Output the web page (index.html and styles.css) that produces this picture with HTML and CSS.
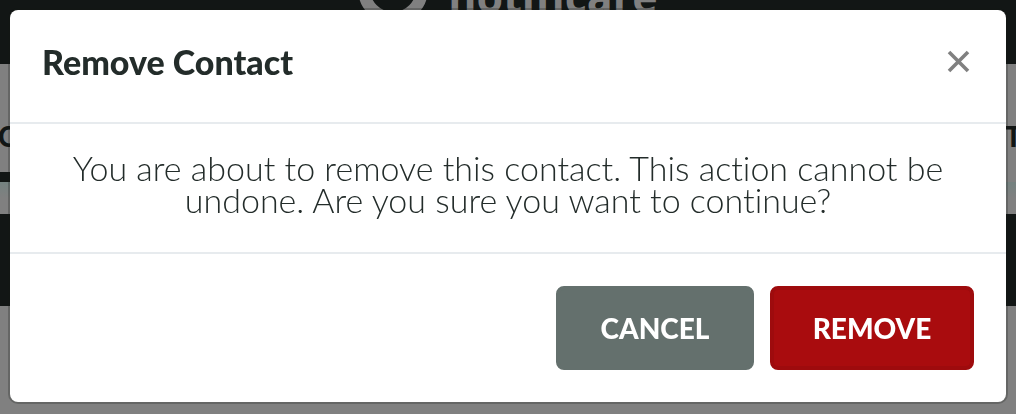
FILE: index.html
```html
<!DOCTYPE html>
<html lang="en">
<head>
<meta charset="utf-8">
<title>Remove Contact</title>
<link rel="stylesheet" href="styles.css">
</head>
<body>
<div class="page">
  <header class="site-header">
    <div class="brand">
      <svg class="brand-mark" viewBox="0 0 70 70" aria-hidden="true"><circle cx="35" cy="35" r="29" fill="none" stroke="#808080" stroke-width="12"/></svg>
      <span class="brand-name">notificare</span>
    </div>
  </header>
  <div class="toolbar"><span>C</span><span>T</span></div>
  <div class="divider"><span class="divider-tab"></span></div>
  <div class="shade"><span class="shade-start"></span><span class="shade-end"></span></div>
  <div class="band"></div>
</div>
<div class="overlay">
  <section class="modal" role="dialog" aria-modal="true" aria-labelledby="modal-title">
    <div class="modal-header">
      <h1 class="modal-title" id="modal-title">Remove Contact</h1>
      <button class="close" type="button" aria-label="Close">
        <svg class="close-icon" viewBox="0 0 24 24" aria-hidden="true"><path d="M3 3 22 22M22 3 3 22" fill="none" stroke="#808080" stroke-width="3.600"/></svg>
      </button>
    </div>
    <p class="modal-body">You are about to remove this contact. This action cannot be undone. Are you sure you want to continue?</p>
    <div class="modal-footer">
      <button class="button" type="button">CANCEL</button>
      <button class="button button-danger" type="button">REMOVE</button>
    </div>
  </section>
</div>
</body>
</html>
```
FILE: styles.css
```css
* { box-sizing: border-box; }
body {
  margin: 0;
  background: #808080;
  color: #232c2a;
  font-family: Lato, sans-serif;
  font-variant-ligatures: none;
}
.page { height: 100vh; overflow: hidden; }
.site-header {
  display: flow-root;
  height: 64px;
  background: #121615;
}
.brand {
  display: flex;
  align-items: center;
  justify-content: center;
  gap: 20px;
  height: 70px;
  margin-top: -46px;
  color: #808080;
}
.brand-mark { width: 70px; height: 70px; }
.brand-name {
  padding-top: 16px;
  font: 700 43px/70px "Open Sans", sans-serif;
}
.toolbar {
  display: flex;
  align-items: center;
  justify-content: space-between;
  height: 108px;
  margin: 0 -6px 0 -2px;
  padding-top: 36px;
  color: #121615;
  font-size: 28px;
  font-weight: 900;
}
.divider { height: 10px; }
.divider-tab { display: block; width: 50%; height: 10px; background: #121615; }
.shade { display: flex; justify-content: space-between; height: 32px; }
.shade-start, .shade-end {
  width: 10px;
  height: 16px;
  background: linear-gradient(#748280, #808080);
}
.band { height: 92px; background: #121615; }
.overlay {
  position: fixed;
  inset: 0;
  padding: 10px;
}
.modal {
  overflow: hidden;
  border-radius: 8px;
  background: #fff;
  box-shadow: 0 0 0 2px #12161540;
}
.modal-header {
  display: flex;
  align-items: center;
  justify-content: space-between;
  padding: 30px 32px 38px;
  border-bottom: 2px solid #e7ebee;
}
.modal-title {
  margin: 0;
  font-size: 34px;
  line-height: 44px;
  font-weight: 900;
}
.close {
  display: flex;
  padding: 0 4px 2px;
  border: 0;
  background: none;
}
.close-icon { width: 24px; height: 24px; }
.modal-body {
  margin: 0;
  padding: 28px 32px 36px;
  border-bottom: 2px solid #e7ebee;
  font-size: 34px;
  line-height: 32px;
  font-weight: 300;
  text-align: center;
}
.modal-footer {
  display: flex;
  justify-content: flex-end;
  gap: 16px;
  padding: 32px;
}
.button {
  min-width: 198px;
  height: 84px;
  border: 4px solid #64706d;
  border-radius: 8px;
  background: #64706d;
  color: #fff;
  font: 900 28px/32px Lato, sans-serif;
}
.button-danger {
  min-width: 204px;
  border-color: #9e0b0d;
  background: #a90c0e;
}
```
